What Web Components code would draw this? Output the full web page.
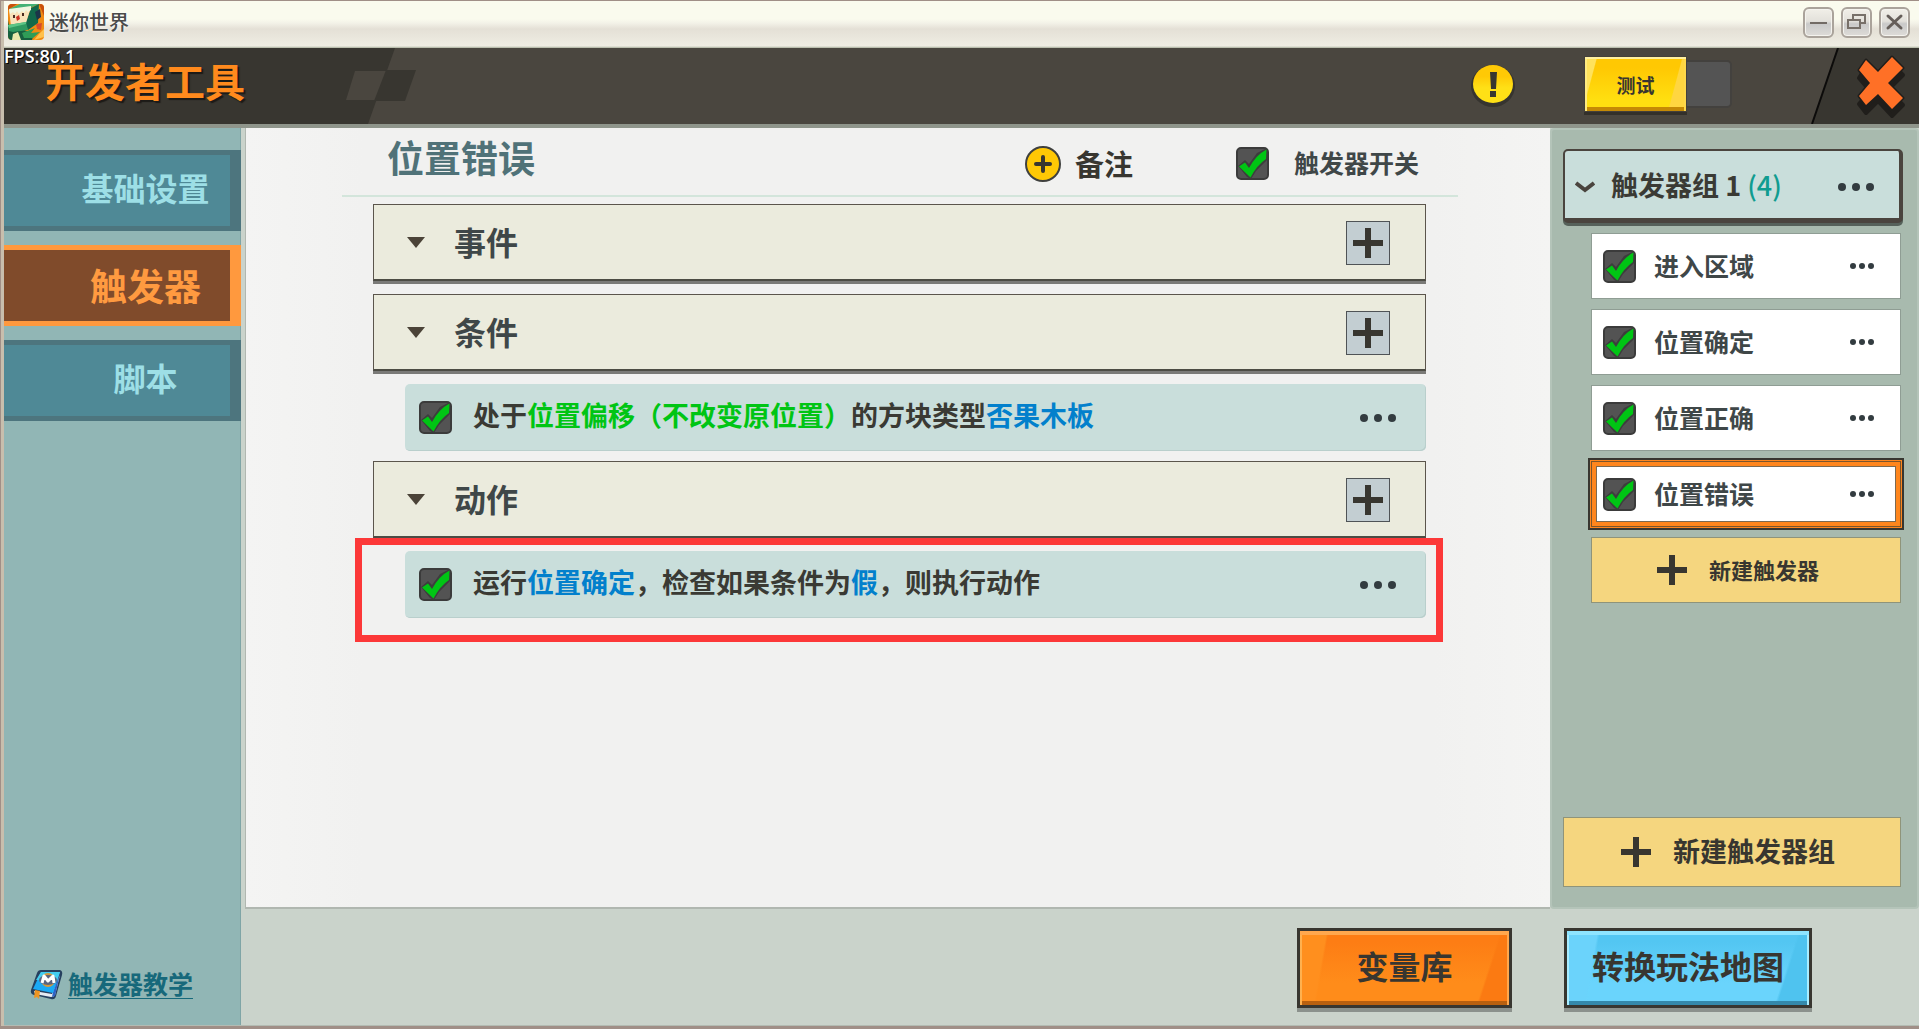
<!DOCTYPE html>
<html lang="zh-CN">
<head>
<meta charset="utf-8">
<title>迷你世界</title>
<style>
  html, body { height: 100%; margin: 0; }
  body {
    font-family: "Noto Sans CJK SC", sans-serif;
    font-weight: 700;
    line-height: 1;
    color: #3a3a34;
    --ink: #3f4748;
    --dark: #383630;
    --green: #00c514;
    --blue: #0280cc;
  }
</style>
</head>
<body>
<mw-window>
  <mw-titlebar slot="title">迷你世界</mw-titlebar>
  <mw-header slot="header" fps="FPS:80.1" mode="测试">开发者工具</mw-header>
  <mw-sidebar slot="side">
    <mw-tab>基础设置</mw-tab>
    <mw-tab active>触发器</mw-tab>
    <mw-tab>脚本</mw-tab>
    <mw-help slot="help">触发器教学</mw-help>
  </mw-sidebar>
  <mw-editor slot="editor" heading="位置错误">
    <mw-section>事件</mw-section>
    <mw-section>条件</mw-section>
    <mw-rule>处于<span class="var">位置偏移（不改变原位置）</span>的方块类型<span class="val">否果木板</span></mw-rule>
    <mw-section>动作</mw-section>
    <mw-rule marked>运行<span class="val">位置确定</span>，检查如果条件为<span class="val">假</span>，则执行动作</mw-rule>
  </mw-editor>
  <mw-groups slot="groups" name="触发器组 1" count="(4)">
    <mw-trigger>进入区域</mw-trigger>
    <mw-trigger>位置确定</mw-trigger>
    <mw-trigger>位置正确</mw-trigger>
    <mw-trigger selected>位置错误</mw-trigger>
    <mw-add>新建触发器</mw-add>
    <mw-add slot="bottom" large>新建触发器组</mw-add>
  </mw-groups>
  <mw-action slot="footer" tone="orange">变量库</mw-action>
  <mw-action slot="footer" tone="blue">转换玩法地图</mw-action>
</mw-window>

<script>
const BASE = `
  *, *::before, *::after { box-sizing: border-box; }
  :host { display: block; box-sizing: border-box; }
  button { font: inherit; color: inherit; margin: 0; padding: 0; border: 0; background: none; cursor: pointer; }
  svg { display: block; flex: none; }
  .check { display: grid; flex: none; width: 33px; height: 33px; }
  .check > * { grid-area: 1 / 1; }
  .check input { appearance: none; width: 100%; height: 100%; margin: 0; border: 2px solid #3b3b3b; border-radius: 5px; background: #535353; }
  .check svg { pointer-events: none; }
`;

const CHECK = `
  <span class="check"><input type="checkbox" id="on" checked>
    <svg viewBox="0 0 33 33" width="33" height="33" aria-hidden="true">
      <path d="M2 19 9 13 13 17 21 6 31 1V13L20 24 15 32 11 30Z" fill="#3d3d3d"/>
      <path d="M3 19.5 9 15.5 13 21Q20 8 30.5 2.5L30 12Q21 18 14.5 30.5Z" fill="#00c514"/>
    </svg></span>`;

const dots = (r, step) => {
  const w = step * 2 + r * 2;
  return `<svg width="${w}" height="${r * 2}" viewBox="0 0 ${w} ${r * 2}" fill="#333c40" aria-hidden="true">
    <circle cx="${r}" cy="${r}" r="${r}"/><circle cx="${r + step}" cy="${r}" r="${r}"/><circle cx="${r + step * 2}" cy="${r}" r="${r}"/></svg>`;
};

const PLUS = `<svg width="30" height="30" viewBox="0 0 30 30" aria-hidden="true"><path d="M12 0h6v12h12v6H18v12h-6V18H0v-6h12z" fill="#383630"/></svg>`;

function define(name, css, html) {
  customElements.define(name, class extends HTMLElement {
    constructor() {
      super();
      const markup = typeof html === 'function' ? html(this) : html;
      this.attachShadow({ mode: 'open' }).innerHTML = `<style>${BASE}${css}</style>${markup}`;
    }
  });
}

define('mw-window', `
  :host { height: 100%; }
  .frame { min-height: 100%; display: grid; grid-template: auto auto 1fr auto / 237px minmax(0, 1fr) 369px;
    border: solid #a08f87; border-width: 1px 0 3px 1px; box-shadow: inset 3px 0 #c8bead, inset 0 -1px #b3bbb2; padding: 0 0 1px 3px; background: #cad3cb; }
  slot[name=title], slot[name=header] { display: block; grid-column: 1 / -1; }
  slot[name=side] { display: grid; grid-column: 1; grid-row: 3 / 5; }
  slot[name=editor], slot[name=groups] { display: grid; }
  slot[name=editor] { grid-column: 2; grid-row: 3; }
  slot[name=groups] { grid-column: 3; grid-row: 3; }
  footer { grid-column: 2 / 4; grid-row: 4; display: flex; justify-content: flex-end; gap: 52px; padding: 19px 107px 13px 0; }
`, `<div class="frame">
  <slot name="title"></slot><slot name="header"></slot><slot name="side"></slot>
  <slot name="editor"></slot><slot name="groups"></slot>
  <footer><slot name="footer"></slot></footer></div>`);

define('mw-titlebar', `
  :host { display: flex; align-items: center; gap: 5px; height: 47px; padding: 0 9px 5px 4px;
    font-size: 20px; font-weight: 500; color: #4b4b4a; text-shadow: 0 0 3px #fff;
    background: linear-gradient(#fafbee 0 18px, #f3f2e8 22px, #e4e0d6 28px, #efede3 45px, #a9b09c 47px); }
  span { flex: 1; }
  button { width: 31px; height: 31px; border: 2px solid #aaa39b; border-radius: 6px; display: grid; place-items: center;
    background: linear-gradient(#f1efe8, #e3e1db 45%, #c9c9c9 55%, #dedcd8); box-shadow: inset 0 0 0 1px #f4f3ee; }
  nav { display: flex; gap: 7px; }
`, `<svg width="36" height="36" viewBox="0 0 36 36" aria-hidden="true">
    <defs><clipPath id="r"><rect width="36" height="36" rx="4"/></clipPath></defs>
    <g clip-path="url(#r)">
      <rect width="36" height="36" fill="#f08a12"/>
      <path d="M0 0h9L0 6zM31 0h5v12z" fill="#c8500c"/>
      <path d="M0 16 2 27 16 26 26 30 24 36H0z" fill="#17603f"/>
      <path d="M1 5 12 0H31L22 4z" fill="#43b276"/>
      <path d="M23 4 31 0 30 19 20 26 17 20z" fill="#12694a"/>
      <path d="M27 8 32 5 33 13 29 16z" fill="#1c3548"/>
      <path d="M1 6 23 3 18 19 3 22z" fill="#f8e3ba"/>
      <path d="M1 5 23 2 23 6 20 8 18 6 16 9 14 7 11 10 9 7 7 10 5 8 2 10z" fill="#eff6df"/>
      <path d="M0 21 18 18 20 26 5 28 1 27z" fill="#2f9a60"/>
      <path d="M0 21 18 18 18 20 1 24z" fill="#5cc586"/>
      <path d="M5 11h2v3H5zM14 9h2v3h-2z" fill="#4a2b20"/>
      <path d="M8 13 11 11 12 15 9 17z" fill="#cf3422"/>
      <path d="M5 30 10 28 13 36H4z" fill="#eae9ab"/>
      <path d="M14 29 27 24 23 29 32 28 25 34H16z" fill="#2f9c57"/>
      <path d="M28 20 34 19 33 26 29 25z" fill="#d74c2b"/>
      <path d="M31 30 36 25V33L26 36z" fill="#ffc04a"/>
    </g></svg>
  <span><slot></slot></span>
  <nav>
    <button aria-label="最小化"><svg width="19" height="19" viewBox="0 0 19 19"><path d="M1 10h17" stroke="#726b65" stroke-width="2"/></svg></button>
    <button aria-label="还原"><svg width="19" height="19" viewBox="0 0 19 19" fill="none" stroke="#777069" stroke-width="2"><path d="M6 6V2h12v8h-4"/><path d="M1 7h12v8H1z"/></svg></button>
    <button aria-label="关闭"><svg width="19" height="19" viewBox="0 0 19 19" stroke="#655e59" stroke-width="3" stroke-linecap="round"><path d="M3 3l13 12M16 3L3 15"/></svg></button>
  </nav>`);

define('mw-header', `
  :host { position: relative; display: flex; align-items: stretch; height: 76px; background: #4a463f; z-index: 1; box-shadow: 0 4px #8f958b; }
  .brand { display: grid; align-items: center; width: 420px; }
  .brand > * { grid-area: 1 / 1; }
  h1 { margin: 0 0 12px 41px; font-size: 40px; color: #ff8a1d; text-shadow: 2px 2px 1px #1c1a17; }
  .fps { position: absolute; left: 0; top: 0; font: 600 18px/16px "Open Sans", sans-serif; color: #fff; text-shadow: 1px 1px #000; }
  .tools { flex: 1; display: flex; align-items: center; justify-content: flex-end; }
  .warn { margin: 0 69px 3px 0; }
  .mode { display: flex; align-items: center; margin: 0 79px 4px 0; }
  .mode button { width: 103px; height: 56px; border: 1px solid #44403a; font-size: 19px; color: var(--dark);
    background: linear-gradient(105deg, #ffe25c 0 10%, transparent 11% 84%, #ffd640 85%), linear-gradient(#ffc803 20%, #ffdf10 80%);
    box-shadow: inset 0 2px #fff0a0, inset 2px 0 #ffeb80, inset -2px 0 #ffd84a, inset 0 -4px #c58a05, 0 3px #33302a; }
  .mode i { width: 45px; height: 48px; border: 2px solid #43413e; border-left: 0; border-radius: 0 5px 5px 0; background: #545454; }
`, el => `<div class="brand">
    <svg width="420" height="76" viewBox="0 0 420 76" aria-hidden="true">
      <path d="M0 0H391L364 76H0z" fill="#383630"/>
      <path d="M351 23H383L372 52H342z" fill="#4a463f"/><path d="M382 22H412L401 53H370z" fill="#383630"/></svg>
    <h1><slot></slot></h1></div>
  <output class="fps">${el.getAttribute('fps')}</output>
  <div class="tools">
    <button class="warn" aria-label="提示"><svg width="44" height="44" viewBox="0 0 44 44">
      <defs><linearGradient id="g" x2="0" y2="1"><stop offset=".3" stop-color="#ffc905"/><stop offset=".6" stop-color="#ffe016"/></linearGradient></defs>
      <ellipse cx="22" cy="23" rx="22" ry="21" fill="#36342f"/><ellipse cx="22" cy="21" rx="20" ry="19" fill="url(#g)"/>
      <path d="M19 9h7l-1 17h-5zM19 28h6v6h-6z" fill="#383630"/></svg></button>
    <div class="mode"><button>${el.getAttribute('mode')}</button><i></i></div>
    <button aria-label="关闭工具"><svg width="108" height="76" viewBox="0 0 108 76">
      <path d="M27 0H108V76H1z" fill="#383630"/><path d="M27 0 1 76" stroke="#0c0b0a" stroke-width="2"/>
      <path d="M55 15 67 27 81 12 92 23 77 38 92 53 81 64 67 49 55 61 48 52 59 39 48 26z" transform="translate(0 4)" fill="#201e1b" stroke="#201e1b" stroke-width="4" stroke-linejoin="round"/>
      <path d="M55 12 67 24 81 9 92 20 77 35 92 50 81 61 67 46 55 57 48 48 59 35 48 22z" fill="#ff7026" stroke="#201e1b" stroke-width="3" stroke-linejoin="round" paint-order="stroke"/></svg></button>
  </div>`);

define('mw-sidebar', `
  :host { display: flex; flex-direction: column; gap: 14px; padding-top: 26px; background: #91b6b5; box-shadow: inset -1px 0 #7fa5a6; }
  .grow { flex: 1; }
`, `<slot></slot><div class="grow"></div><slot name="help"></slot>`);

define('mw-tab', `
  button { display: block; width: 100%; height: 81px; padding-bottom: 7px; border: solid #4d757e; border-width: 5px 11px 5px 0; background: #4f8996;
    color: #9ddfe6; font-size: 32px; }
  :host([active]) button { padding-bottom: 0; border-color: #ff993e; background: #804b2b; color: #ff9a40; font-size: 37px; }
  span { display: block; padding-left: 57px; text-align: center; }
`, `<button><span><slot></slot></span></button>`);

define('mw-help', `
  a { display: flex; align-items: center; gap: 4px; margin: 0 0 24px 26px; color: #17697b; font-size: 25px; text-decoration: none; }
  span { border-bottom: 1px solid #17697b; padding-bottom: 2px; }
`, `<a href="#"><svg width="34" height="32" viewBox="0 0 34 32" aria-hidden="true">
    <path d="M11 1H30Q33 2 32 6L26 27Q25 31 21 30L4 26Q0 25 1 21L7 4Q8 1 11 1z" fill="#26405f"/>
    <path d="M4 22 22 25 30 6 25 26Q24 28 21 28L5 25z" fill="#e6ecf4"/>
    <path d="M30 5 25 27 22 28 23 23z" fill="#2f62c4"/>
    <path d="M11 3H30L23 24 3 20z" fill="#1aaaf6"/><path d="M11 3H30L27 12 6 11z" fill="#44cdf0"/>
    <path d="M5 21 10 22 9 30 7 28 4 29z" fill="#ee9522"/>
    <circle cx="18" cy="11" r="7" fill="#d49a3c"/><ellipse cx="18" cy="11" rx="9" ry="5" fill="#5a6580"/>
    <path d="M12 14 14 7 18 12 23 7 24 14" fill="none" stroke="#fff" stroke-width="3" stroke-linejoin="round"/></svg>
  <span><slot></slot></span></a>`);

define('mw-editor', `
  :host { margin: 4px 0 0 4px; padding: 0 92px 0 96px; border: solid #b0b7b0; border-width: 0 0 2px 1px;
    background: linear-gradient(90deg, #f4f4f3, #f1f1f0 9% 91%, #f4f4f3); }
  header { display: flex; align-items: center; height: 69px; padding: 4px 39px 0 45px; border-bottom: 2px solid #d3e5db; margin-bottom: 7px; }
  h2 { flex: 1; margin: 0; padding-bottom: 12px; font-size: 37px; color: #507278; }
  .note { display: flex; align-items: center; gap: 14px; font-size: 29px; margin-right: 103px; color: var(--dark); }
  .switch { display: flex; align-items: center; gap: 25px; font-size: 25px; color: var(--ink); }
  label { padding-bottom: 3px; }
  .list { display: flex; flex-direction: column; gap: 10px; padding: 0 32px 0 31px; }
`, el => `<header><h2>${el.getAttribute('heading')}</h2>
    <button class="note"><svg width="36" height="36" viewBox="0 0 36 36" aria-hidden="true"><circle cx="18" cy="18" r="17" fill="#ffc805" stroke="#3f403e" stroke-width="2"/>
      <path d="M18 11v14M11 18h14" stroke="#383630" stroke-width="4" stroke-linecap="round"/></svg>备注</button>
    <span class="switch">${CHECK}<label for="on">触发器开关</label></span></header>
  <div class="list"><slot></slot></div>`);

define('mw-section', `
  :host { display: flex; align-items: center; height: 77px; margin-bottom: 3px; padding: 1px 35px 0 33px;
    border: 1px solid #5b554c; border-bottom: 2px solid #4c4c44; box-shadow: 0 3px #7a7a77; background: #ebebdd; }
  h3 { flex: 1; margin: 0 0 0 29px; padding-bottom: 4px; font-size: 32px; color: var(--ink); }
  button { display: grid; place-items: center; width: 44px; height: 44px; border: 1px solid #4f5356; background: #c3ced2; }
`, `<svg width="18" height="11" viewBox="0 0 18 11" aria-hidden="true"><path d="M0 0h18L9 11z" fill="#4b4338"/></svg>
  <h3><slot></slot></h3><button aria-label="添加">${PLUS}</button>`);

define('mw-rule', `
  :host { position: relative; display: flex; align-items: center; height: 67px; margin-left: 32px; padding: 0 30px 0 14px;
    border-radius: 5px; background: #c9dedb; box-shadow: inset -1px -1px #b9cfcc; }
  label { flex: 1; margin-left: 21px; padding-bottom: 7px; font-size: 27px; white-space: nowrap; }
  ::slotted(.var) { color: var(--green); }
  ::slotted(.val) { color: var(--blue); }
  .mark { display: none; position: absolute; inset: -13px -17px -24px -50px; border: 7px solid #fc3838; pointer-events: none; }
  :host([marked]) .mark { display: block; }
`, `${CHECK}<label for="on"><slot></slot></label><button aria-label="更多">${dots(4, 14)}</button><div class="mark"></div>`);

define('mw-groups', `
  :host { display: flex; flex-direction: column; margin-top: 4px; padding: 19px 16px 20px 11px; border: 2px solid #b4c4b9; border-radius: 4px; background: #a8baae; }
  .group { display: flex; align-items: center; height: 74px; padding: 4px 25px 0 10px; margin: 0 -2px 3px 0;
    border: solid #4a443e; border-width: 2px 4px 5px 2px; border-radius: 5px; background: #c9dedb; box-shadow: 0 3px #56615a; }
  h2 { flex: 1; margin: 0 0 0 16px; font-size: 27px; font-weight: 700; padding-bottom: 4px; }
  em { font-style: normal; font-weight: 500; color: #109c90; }
  .list { display: flex; flex-direction: column; gap: 10px; margin: 7px 0 0 28px; }
  .grow { flex: 1; }
`, el => `<div class="group"><svg width="20" height="12" viewBox="0 0 20 12" fill="none" stroke="#4a443e" stroke-width="4" aria-hidden="true"><path d="M1 2 10 9 19 2"/></svg>
    <h2>${el.getAttribute('name')} <em>${el.getAttribute('count')}</em></h2><button aria-label="更多">${dots(4, 14)}</button></div>
  <div class="list"><slot></slot></div><div class="grow"></div><slot name="bottom"></slot>`);

define('mw-trigger', `
  :host { display: flex; align-items: center; height: 66px; padding: 0 26px 0 11px; border: 1px solid #8f9d94; background: #fff; }
  :host([selected]) { border-color: #7b552c; box-shadow: 0 0 0 1px #ff861d, 0 0 0 3px #383630, inset 0 0 0 4px #ff861d, inset 0 0 0 5px #7b6a52; }
  label { flex: 1; margin-left: 18px; padding-bottom: 2px; font-size: 25px; color: var(--ink); }
`, `${CHECK}<label for="on"><slot></slot></label><button aria-label="更多">${dots(3, 9)}</button>`);

define('mw-add', `
  button { display: flex; align-items: center; justify-content: center; gap: 22px; width: 100%; height: 66px; padding-right: 16px;
    border: 1px solid #8f947a; background: #f5d67f; font-size: 22px; color: var(--dark); }
  span { padding-bottom: 3px; }
  :host([large]) button { height: 70px; padding-right: 8px; font-size: 27px; }
`, `<button>${PLUS}<span><slot></slot></span></button>`);

define('mw-action', `
  button { height: 80px; min-width: 215px; padding: 0 25px 7px; margin-bottom: 4px; border: 3px solid #383630; font-size: 32px; color: var(--dark); }
  :host([tone=orange]) button { background: linear-gradient(100deg, #ff8f1e 12%, transparent 13%), linear-gradient(288deg, #fb7a12 13%, transparent 14%), linear-gradient(#fd7d14 15%, #ff8c1a 70%);
    box-shadow: 0 4px #8b918c, inset 0 4px #ffa84e, inset 2px 0 #ffb14f, inset -2px 0 #ffa84e, inset 0 -4px #b9600f; }
  :host([tone=blue]) button { background: linear-gradient(100deg, #6bd3fb 12%, transparent 13%), linear-gradient(288deg, #4fc3ef 12%, transparent 13%), linear-gradient(#53c6f2 15%, #6ad4fc 70%);
    box-shadow: 0 4px #8b918c, inset 0 4px #8ee4ff, inset 2px 0 #a9edff, inset -2px 0 #a9edff, inset 0 -4px #3489ab; }
`, `<button><slot></slot></button>`);
</script>
</body>
</html>
